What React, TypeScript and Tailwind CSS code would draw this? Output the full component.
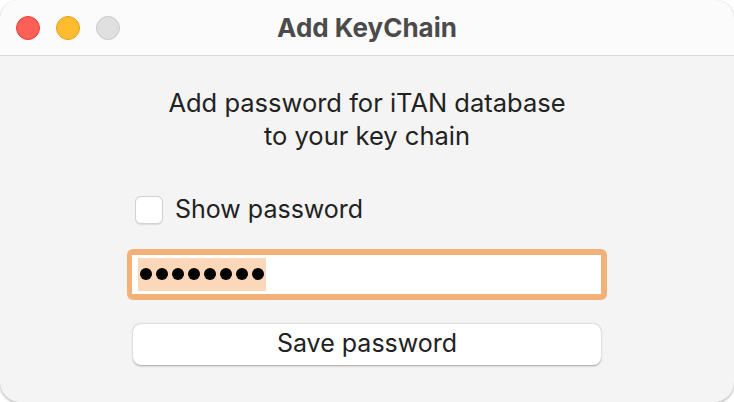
export default function App() {
  return (
    <div className="w-[734px] h-[402px] bg-white" style={{ fontFamily: 'Inter, "Noto Sans", sans-serif' }}>
      <div className="w-full h-full rounded-[20px] overflow-hidden bg-[#f4f4f4] shadow-[0_1px_3px_rgba(0,0,0,0.35)] flex flex-col">
        <div className="h-[56px] flex-shrink-0 bg-[#fbfbfb] border-b border-[#d9d9d9] flex items-center relative">
          <div className="flex gap-[16px] pl-[16px]">
            <span className="w-[24px] h-[24px] rounded-full bg-[#fe5f57] border border-[#e0443e]" />
            <span className="w-[24px] h-[24px] rounded-full bg-[#febc2e] border border-[#dea123]" />
            <span className="w-[24px] h-[24px] rounded-full bg-[#e0e0e0] border border-[#cacaca]" />
          </div>
          <div className="absolute inset-0 flex items-center justify-center text-[26px] font-bold text-[#4b4b4b]">
            Add KeyChain
          </div>
        </div>
        <div className="flex flex-col items-center">
          <p className="mt-[30px] text-center text-[25.5px] leading-[33px] text-[#222]">
            Add password for iTAN database
            <br />
            to your key chain
          </p>
          <div className="w-[480px] mt-[39px] flex flex-col">
            <label className="flex items-center gap-[12px] pl-[8px]">
              <span className="w-[28px] h-[28px] rounded-[6px] bg-white border border-[#d2d2d2] shadow-[0_0.5px_1px_rgba(0,0,0,0.1)]" />
              <span className="text-[25px] text-[#222]">Show password</span>
            </label>
            <div className="mt-[20px] h-[51px] rounded-[6px] bg-[#f2b179] p-[6px] pl-[5px] pr-[6px]">
              <div className="h-full bg-white flex items-center px-[6px]">
                <span className="h-[33px] bg-[#fcd8bb] flex items-center gap-[4px] px-[2px]">
                  {Array.from({ length: 8 }).map((_, i) => (
                    <span key={i} className="w-[12px] h-[12px] rounded-full bg-black" />
                  ))}
                </span>
              </div>
            </div>
            <button className="mt-[24px] ml-[6px] w-[468px] h-[41px] rounded-[8px] bg-white shadow-[0_0.5px_2px_rgba(0,0,0,0.35)] text-[25px] text-[#222]">
              Save password
            </button>
          </div>
        </div>
      </div>
    </div>
  )
}
